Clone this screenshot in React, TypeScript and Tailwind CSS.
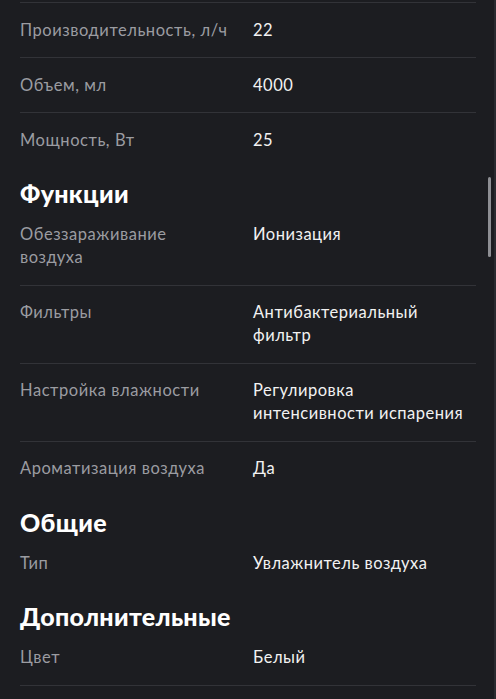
import React from "react";

type Row = { label: string; value: string; last?: boolean };
type Section = { title?: string; rows: Row[] };

const sections: Section[] = [
  {
    rows: [
      { label: "Производительность, л/ч", value: "22" },
      { label: "Объем, мл", value: "4000" },
      { label: "Мощность, Вт", value: "25", last: true },
    ],
  },
  {
    title: "Функции",
    rows: [
      { label: "Обеззараживание воздуха", value: "Ионизация" },
      { label: "Фильтры", value: "Антибактериальный фильтр" },
      { label: "Настройка влажности", value: "Регулировка интенсивности испарения" },
      { label: "Ароматизация воздуха", value: "Да", last: true },
    ],
  },
  {
    title: "Общие",
    rows: [{ label: "Тип", value: "Увлажнитель воздуха", last: true }],
  },
  {
    title: "Дополнительные",
    rows: [{ label: "Цвет", value: "Белый" }],
  },
];

export default function App() {
  return (
    <div
      className="relative w-[496px] h-[699px] overflow-hidden bg-[#1c1d21]"
      style={{ fontFamily: "Lato, 'Noto Sans', sans-serif" }}
    >
      <div className="pl-5 pr-5 w-[456px] box-content">
        <div className="h-[2px] border-b border-[#323338] box-content" />
        {sections.map((s, i) => (
          <div key={i}>
            {s.title && (
              <h2 className="pt-3 text-[25px] leading-[28.5px] font-black text-white tracking-[0.3px]">
                {s.title}
              </h2>
            )}
            {s.rows.map((r, j) => (
              <div
                key={j}
                className={`flex py-[15.5px] text-[16.5px] leading-[23px] ${
                  r.last ? "" : "border-b border-[#323338]"
                }`}
              >
                <div className="w-[233px] shrink-0 pr-[22px] text-[#9b9ca1] tracking-[0.55px]">{r.label}</div>
                <div className="w-[223px] text-[#f2f2f2] tracking-[0.5px]">{r.value}</div>
              </div>
            ))}
          </div>
        ))}
      </div>
      <div className="absolute right-[5px] top-[177px] w-[3px] h-[80px] rounded-full bg-[#8e8f94]" />
      <div className="absolute right-0 top-0 w-[2px] h-full bg-[#2a2b30]" />
    </div>
  );
}
